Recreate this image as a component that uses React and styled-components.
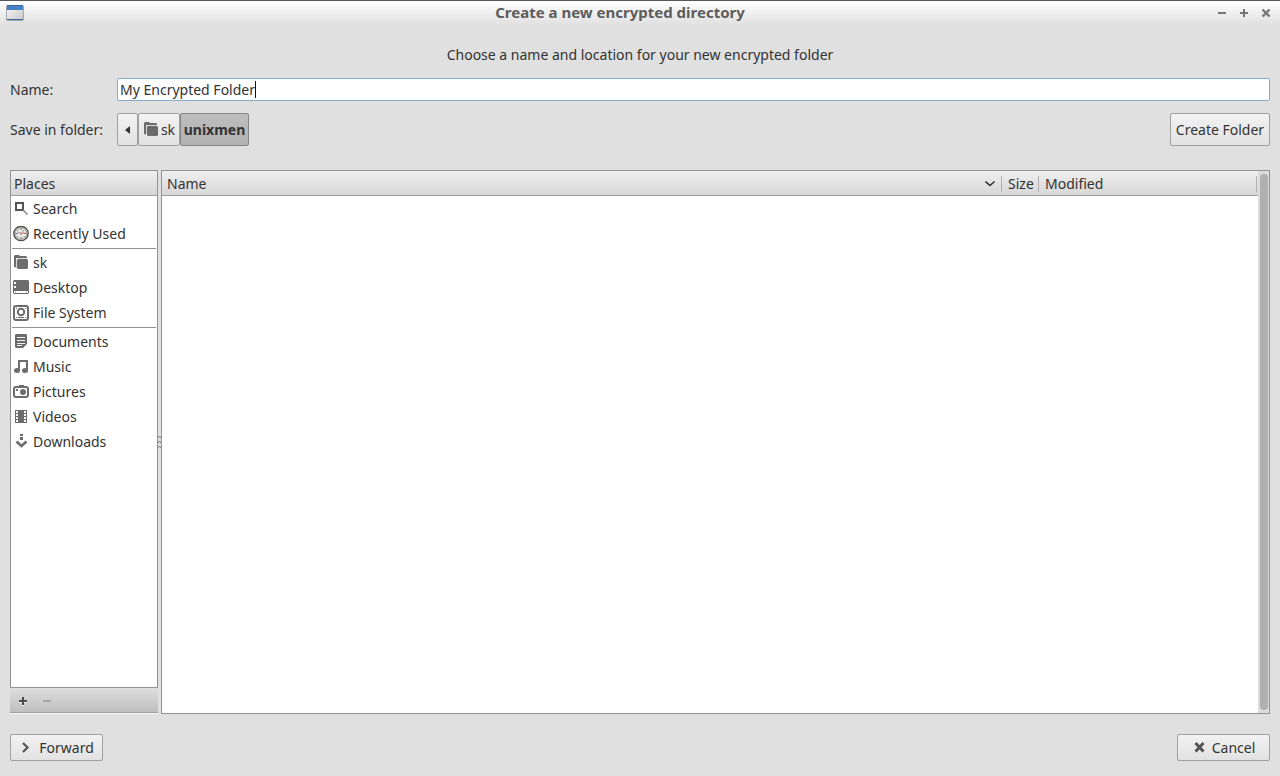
import React from "react";
import styled, { createGlobalStyle, css } from "styled-components";

const GlobalStyle = createGlobalStyle`
  *, *::before, *::after { box-sizing: border-box; }
  body {
    margin: 0;
    background: #e0e0e0;
    color: #333;
    font-family: "Noto Sans", "Open Sans", sans-serif;
    font-size: 14px;
    line-height: 20px;
  }
  button, input { font: inherit; color: inherit; }
  ul { list-style: none; margin: 0; padding: 0; }
`;

const line = "#929292";
const headFill = "linear-gradient(#efefef, #d6d6d6)";

const Window = styled.div`
  min-height: 100vh;
  display: flex;
  flex-direction: column;
  border-top: 1px solid #5a5658;
`;

const TitleBar = styled.header`
  display: flex;
  align-items: center;
  height: 24px;
  padding: 0 8px 0 6px;
  background: linear-gradient(#fff, #e0e0e0);
`;

const Title = styled.h1`
  flex: 1;
  margin: 0;
  padding-bottom: 2px;
  color: #5c5c5c;
  font-size: 15px;
  font-weight: 700;
  text-align: center;
`;

const WindowButtons = styled.div`
  display: flex;
  justify-content: flex-end;
  gap: 10px;
`;

const IconButton = styled.button`
  display: flex;
  align-items: center;
  justify-content: center;
  width: ${(p) => p.$size}px;
  height: ${(p) => p.$size}px;
  padding: 0;
  border: 0;
  background: none;
  color: ${(p) => p.$color || "#777"};
`;

const Content = styled.main`
  flex: 1;
  display: flex;
  flex-direction: column;
  padding: 20px 10px 15px;
`;

const Hint = styled.p`
  margin: 0 0 13px;
  text-align: center;
`;

const Field = styled.div`
  display: grid;
  grid-template-columns: 107px 1fr;
  align-items: center;
  margin-bottom: ${(p) => p.$after}px;
`;

const Entry = styled.div`
  display: flex;
  align-items: center;
  height: 23px;
  padding: 0 2px;
  border: 1px solid #84aed0;
  border-radius: 2px;
  background: #fff;
`;

const EntryInput = styled.input`
  field-sizing: content;
  padding: 0;
  border: 0;
  outline: 0;
  background: none;
`;

const Caret = styled.span`
  width: 1px;
  height: 17px;
  background: #111;
`;

const PathRow = styled.div`
  display: flex;
  justify-content: space-between;
`;

const PathBar = styled.nav`
  display: flex;
`;

const Button = styled.button`
  display: flex;
  align-items: center;
  justify-content: center;
  gap: ${(p) => p.$gap || 0}px;
  height: ${(p) => (p.$tall ? 33 : 27)}px;
  min-width: ${(p) => p.$min || 0}px;
  padding: 0 2px;
  border: 1px solid #a0a0a0;
  border-radius: 2px;
  background: linear-gradient(#f2f2f2, #e2e2e2);
  white-space: nowrap;
  ${(p) =>
    p.$active &&
    css`
      border-color: #858585;
      background: linear-gradient(#bdbdbd, #b2b2b2);
      font-weight: 700;
    `}
`;

const Browser = styled.div`
  flex: 1;
  display: flex;
`;

const Sidebar = styled.aside`
  width: 148px;
  display: flex;
  flex-direction: column;
`;

const PlacesBox = styled.div`
  flex: 1;
  border: 1px solid ${line};
  background: #fff;
`;

const PlacesHead = styled.h2`
  height: 25px;
  margin: 0;
  padding: 3px 3px 0;
  border-bottom: 1px solid #a0a0a0;
  background: ${headFill};
  font-size: 14px;
  font-weight: 400;
`;

const PlaceGroup = styled.ul`
  & + & {
    padding-top: 1px;
  }
  & + &::before {
    content: "";
    display: block;
    height: 1px;
    margin: 1px 1px;
    background: ${line};
  }
`;

const Place = styled.a`
  display: flex;
  align-items: center;
  gap: 4px;
  height: 25px;
  padding: 1px 0 0 2px;
  color: inherit;
  text-decoration: none;
`;

const PlacesTools = styled.div`
  display: flex;
  align-items: center;
  gap: 8px;
  height: 25px;
  padding: 2px 0 0 5px;
  border-bottom: 1px solid #a0a0a0;
  box-shadow: 0 1px #fafafa;
  background: linear-gradient(#dedede, #bfbfbf);
  margin-bottom: 1px;
`;

const Splitter = styled.div`
  width: 3px;
  display: flex;
  align-items: center;
  justify-content: center;
`;

const FileList = styled.section`
  flex: 1;
  display: flex;
  border: 1px solid ${line};
  background: #fff;
`;

const FileTable = styled.div`
  flex: 1;
`;

const Table = styled.table`
  width: 100%;
  table-layout: fixed;
  border-collapse: collapse;
`;

const HeadRow = styled.tr`
  height: 25px;
  background: ${headFill};
  box-shadow: inset 0 -1px #a0a0a0;
`;

const HeadCell = styled.th`
  width: ${(p) => p.$width || "auto"};
  padding: 0 6px 0 5px;
  background: linear-gradient(#b0b0b0, #b0b0b0) right 1px center / 1px 16px no-repeat;
  font-weight: 400;
  text-align: left;
`;

const HeadLabel = styled.span`
  display: flex;
  align-items: center;
  justify-content: space-between;
`;

const ScrollTrack = styled.div`
  width: 11px;
  display: flex;
  padding: 3px 1px 3px 2px;
  background: #dcdcdc;
`;

const ScrollThumb = styled.div`
  flex: 1;
  border-radius: 4px;
  background: #b0b0b0;
`;

const Actions = styled.footer`
  display: flex;
  justify-content: space-between;
  margin-top: 20px;
`;

const Svg = styled.svg`
  display: block;
  flex: none;
`;

function Icon({ size = 16, children }) {
  return (
    <Svg width={size} height={size} viewBox={`0 0 ${size} ${size}`} fill="none" aria-hidden="true">
      {children}
    </Svg>
  );
}

const g = "#6c6c6c";

const FolderIcon = () => (
  <Icon>
    <path d="M1 1 2 0H6L7 1H13L14 2V3H3.500L3 3.500V12.500L1 12Z" fill={g} />
    <path d="M4 5 5 4H14L15 5V13L14 14H5L4 13Z" fill={g} />
    <path d="M3.500 13V4.500L4.500 3.500H14" stroke="#d2d2d2" strokeWidth=".8" />
  </Icon>
);

const icons = {
  Search: (
    <Icon>
      <rect x="3" y="2" width="7" height="7" stroke="#555" strokeWidth="2" />
      <path d="M10 9 14.500 13.500" stroke="#888" strokeWidth="1.600" />
    </Icon>
  ),
  "Recently Used": (
    <Icon>
      <circle cx="8" cy="7.500" r="7.200" fill="#c9c9c6" stroke="#4c4c4c" strokeWidth="1.300" />
      <circle cx="8" cy="7.500" r="5.600" fill="#eeeeeb" stroke="#8c8c8c" strokeWidth=".7" />
      <path d="M8 2.500V4M8 11V12.500M3 7.500H4.500M11.500 7.500H13M4.500 4 5.200 4.700M11.500 11 10.800 10.300M4.500 11 5.200 10.300" stroke="#555" />
      <path d="M4.500 6 8 7.500 11 4" stroke="#888" />
      <path d="M7 8.500 11.500 6.500" stroke="#d66" />
    </Icon>
  ),
  sk: <FolderIcon />,
  Desktop: (
    <Icon>
      <path d="M1 0H15L16 1V13L15 14H1L0 13V1Z" fill={g} />
      <path d="M1 2H3V4H1ZM1 6H3V8H1ZM1 11H15V13H1Z" fill="#fff" />
      <path d="M2 11H3V13H2ZM13 11H14V13H13Z" fill="#c4c4c4" />
    </Icon>
  ),
  "File System": (
    <Icon>
      <rect x="1" y="1" width="14" height="14" rx="2" stroke={g} strokeWidth="2" />
      <circle cx="8" cy="7" r="3.200" stroke={g} strokeWidth="2" />
      <path d="M3 3H4V4H3ZM12 3H13V4H12ZM3 12H4V13H3ZM12 12H13V13H12ZM5 12H11V13H5Z" fill={g} />
    </Icon>
  ),
  Documents: (
    <Icon>
      <path d="M2 1 3 0H13L14 1V10L10 14H3L2 13Z" fill={g} />
      <path d="M4 3.500H12M4 6.500H12M4 9.500H12M4 11.500H9" stroke="#fff" strokeWidth=".9" />
    </Icon>
  ),
  Music: (
    <Icon>
      <path d="M5 1H15V11H13V3H7V12H5Z" fill={g} />
      <ellipse cx="4" cy="11.500" rx="3" ry="2.500" fill={g} />
      <ellipse cx="12" cy="11.500" rx="3" ry="2.500" fill={g} />
    </Icon>
  ),
  Pictures: (
    <Icon>
      <rect x="1" y="3" width="14" height="10" rx="2" stroke={g} strokeWidth="2" />
      <path d="M6 1H11V3H6ZM3 5H5V7H3Z" fill={g} />
      <circle cx="10" cy="8" r="3" fill={g} />
    </Icon>
  ),
  Videos: (
    <Icon>
      <path d="M2 1H14V14H2Z" fill={g} />
      <path d="M3 2H5V4H3ZM3 5H5V7H3ZM3 8H5V10H3ZM3 11H5V13H3ZM11 2H13V4H11ZM11 5H13V7H11ZM11 8H13V10H11ZM11 11H13V13H11Z" fill="#fff" />
    </Icon>
  ),
  Downloads: (
    <Icon>
      <path d="M7 0H10V2H7ZM7 3H10V6H7Z" fill={g} />
      <path d="M3.500 7.500 8.500 12 13.500 7.500" stroke={g} strokeWidth="2.600" />
    </Icon>
  ),
};

const groups = [
  ["Search", "Recently Used"],
  ["sk", "Desktop", "File System"],
  ["Documents", "Music", "Pictures", "Videos", "Downloads"],
];

export default function App() {
  return (
    <>
      <GlobalStyle />
      <Window>
        <TitleBar>
          <Svg width="18" height="16" viewBox="0 0 18 16" aria-hidden="true">
            <defs>
              <linearGradient id="pane" x1="0" y1="0" x2="1" y2="1">
                <stop offset="0" stopColor="#f6f6f6" />
                <stop offset="1" stopColor="#c9c9c9" />
              </linearGradient>
            </defs>
            <rect x=".5" y=".5" width="17" height="15" rx="1" fill="url(#pane)" stroke="#a3a6ad" />
            <path d="M1 0H17V5H1Z" fill="#4a80c2" />
            <path d="M1 0H17V1H1ZM1 14H17V15H1Z" fill="#3c66a4" />
          </Svg>
          <Title>Create a new encrypted directory</Title>
          <WindowButtons>
            <IconButton type="button" $size={12} aria-label="Minimize">
              <Icon size={12}>
                <path d="M2 6H10" stroke="currentColor" strokeWidth="2" />
              </Icon>
            </IconButton>
            <IconButton type="button" $size={12} aria-label="Maximize">
              <Icon size={12}>
                <path d="M2 6H10M6 2V10" stroke="currentColor" strokeWidth="2" />
              </Icon>
            </IconButton>
            <IconButton type="button" $size={12} aria-label="Close">
              <Icon size={12}>
                <path d="M2.500 2.500 9.500 9.500M9.500 2.500 2.500 9.500" stroke="currentColor" strokeWidth="2.400" />
              </Icon>
            </IconButton>
          </WindowButtons>
        </TitleBar>

        <Content>
          <Hint>Choose a name and location for your new encrypted folder</Hint>
          <Field $after={12}>
            <label htmlFor="folder-name">Name:</label>
            <Entry>
              <EntryInput id="folder-name" type="text" defaultValue="My Encrypted Folder" />
              <Caret />
            </Entry>
          </Field>
          <Field $after={24}>
            <span id="save-in">Save in folder:</span>
            <PathRow>
              <PathBar aria-labelledby="save-in">
                <Button type="button" $tall $min={21} aria-label="Back">
                  <Icon size={10}>
                    <path d="M7 1V9L2 5Z" fill="#333" />
                  </Icon>
                </Button>
                <Button type="button" $tall $min={42} $gap={2}>
                  <FolderIcon />
                  sk
                </Button>
                <Button type="button" $tall $active $min={69}>
                  unixmen
                </Button>
              </PathBar>
              <Button type="button" $tall $min={100}>
                Create Folder
              </Button>
            </PathRow>
          </Field>

          <Browser>
            <Sidebar>
              <PlacesBox>
                <PlacesHead>Places</PlacesHead>
                {groups.map((group) => (
                  <PlaceGroup key={group[0]}>
                    {group.map((name) => (
                      <li key={name}>
                        <Place href="#">
                          {icons[name]}
                          {name}
                        </Place>
                      </li>
                    ))}
                  </PlaceGroup>
                ))}
              </PlacesBox>
              <PlacesTools>
                <IconButton type="button" $size={16} $color="#4a4a4a" aria-label="Add bookmark">
                  <Icon>
                    <path d="M4 9H12M8 5V13" stroke="#f4f4f4" strokeWidth="2" />
                    <path d="M4 8H12M8 4V12" stroke="currentColor" strokeWidth="2" />
                  </Icon>
                </IconButton>
                <IconButton type="button" $size={16} $color="#a6a6a6" aria-label="Remove bookmark" disabled>
                  <Icon>
                    <path d="M4 8H12" stroke="currentColor" strokeWidth="2" />
                  </Icon>
                </IconButton>
              </PlacesTools>
            </Sidebar>
            <Splitter>
              <Svg width="3" height="13" viewBox="0 0 3 13" fill="none" aria-hidden="true">
                <path d="M0 1.500 1.500 .5 3 1.500M0 6.500 1.500 5.500 3 6.500M0 11.500 1.500 10.500 3 11.500" stroke="#666" />
              </Svg>
            </Splitter>
            <FileList>
              <FileTable>
                <Table>
                  <thead>
                    <HeadRow>
                      <HeadCell>
                        <HeadLabel>
                          Name
                          <Icon size={12}>
                            <path d="M.5 3.500 5 7.500 9.500 3.500" stroke="#333" strokeWidth="1.600" />
                          </Icon>
                        </HeadLabel>
                      </HeadCell>
                      <HeadCell $width="37px">Size</HeadCell>
                      <HeadCell $width="218px">Modified</HeadCell>
                    </HeadRow>
                  </thead>
                </Table>
              </FileTable>
              <ScrollTrack>
                <ScrollThumb />
              </ScrollTrack>
            </FileList>
          </Browser>

          <Actions>
            <Button type="button" $min={93} $gap={4}>
              <Icon>
                <path d="M4 3 8.500 7.500 4 12" stroke="#555" strokeWidth="2.200" />
              </Icon>
              Forward
            </Button>
            <Button type="button" $min={93} $gap={4}>
              <Icon>
                <path d="M3.500 3 11.500 11.500M11.500 3 3.500 11.500" stroke="#555" strokeWidth="3" />
              </Icon>
              Cancel
            </Button>
          </Actions>
        </Content>
      </Window>
    </>
  );
}
